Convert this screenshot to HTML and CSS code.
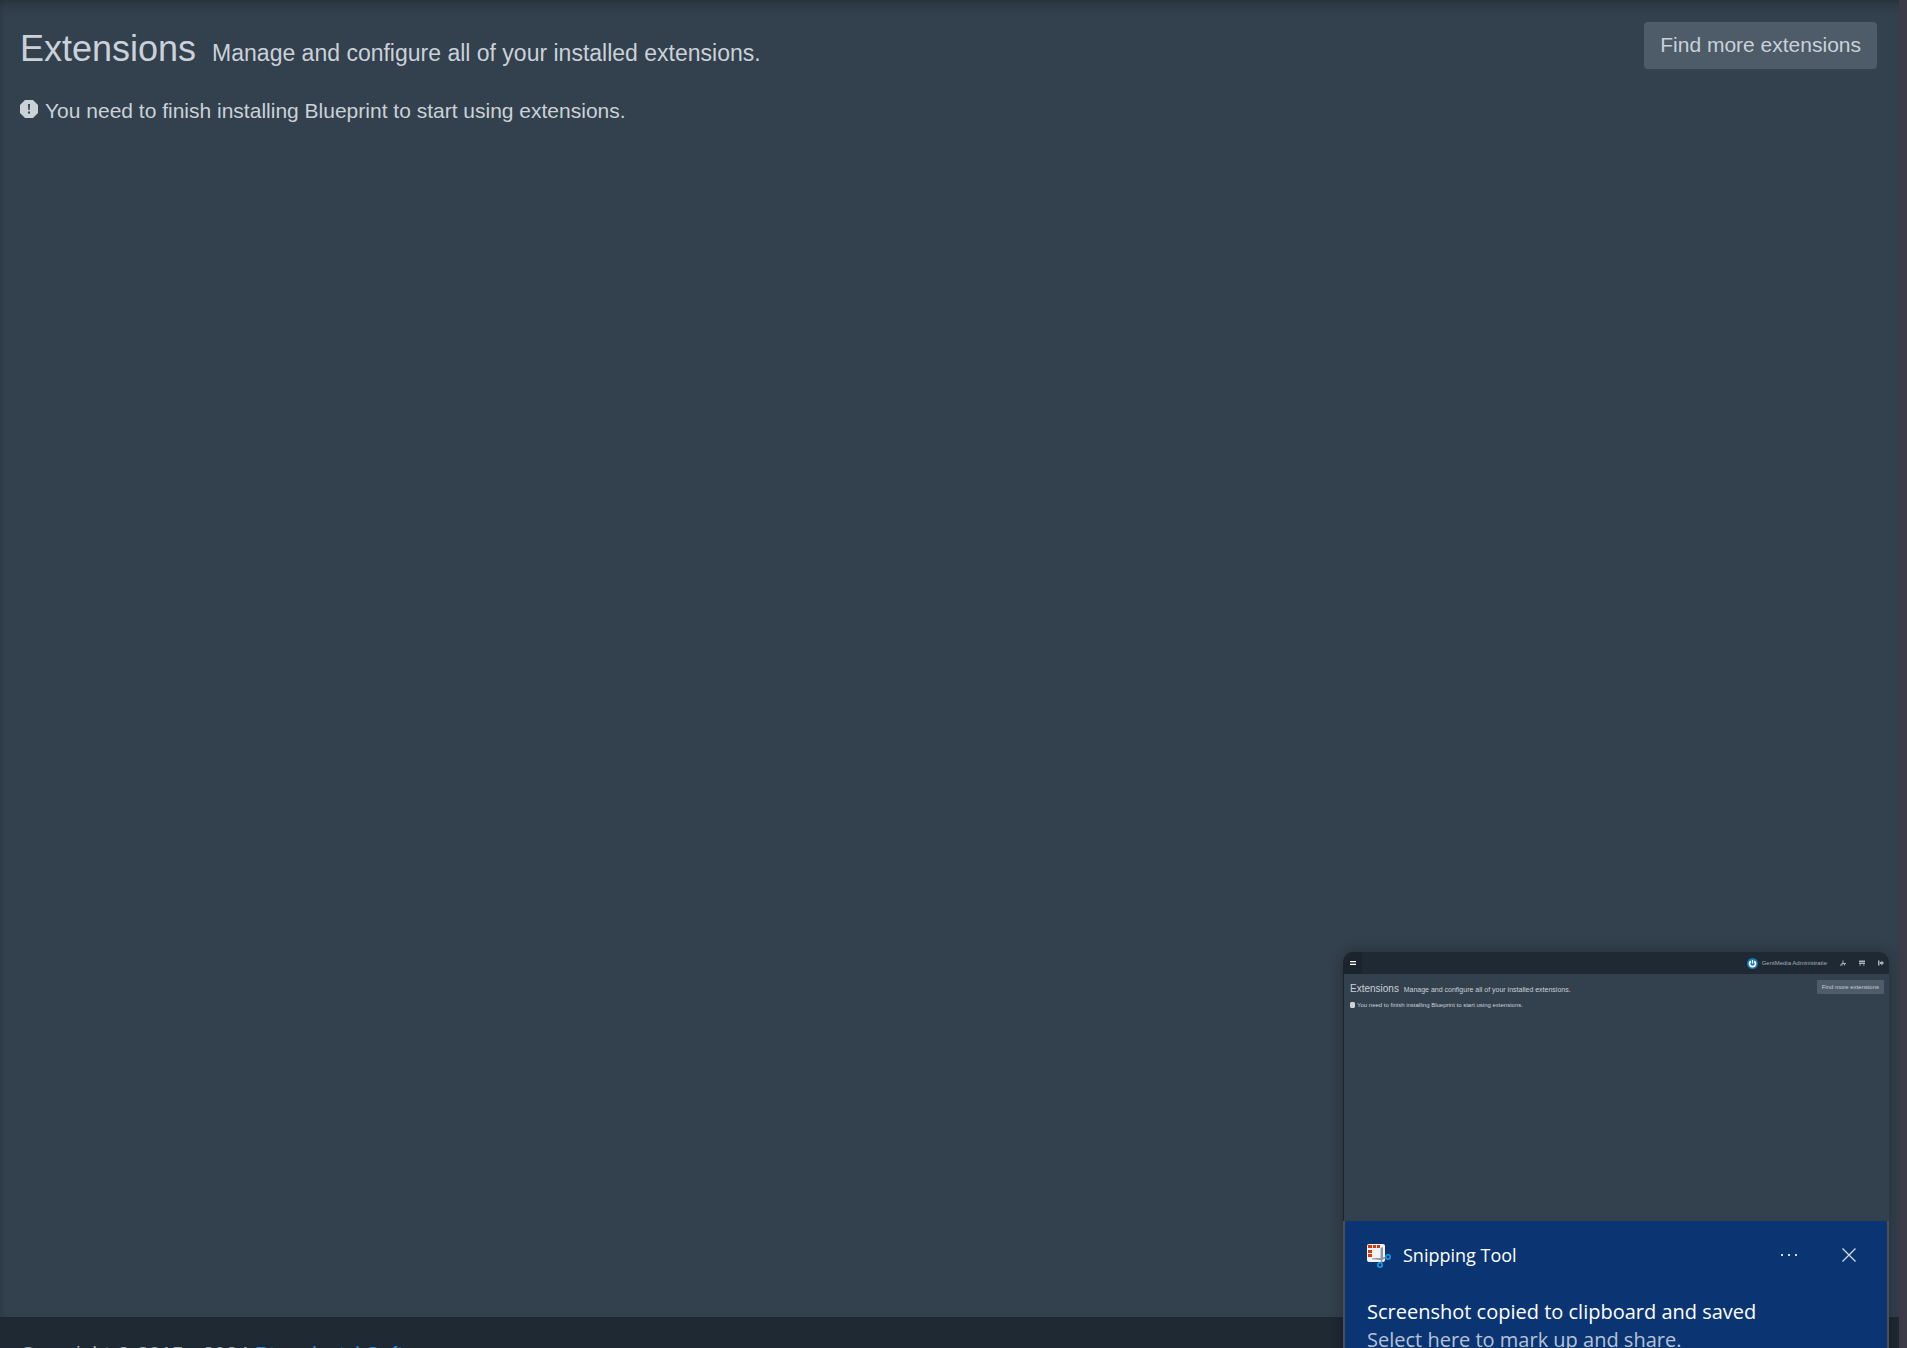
FILE: index.html
```
<!DOCTYPE html>
<html lang="en">
    <head>
        <meta charset="utf-8">
        <title>Extensions</title>
        <link rel="stylesheet" href="styles.css">
    </head>
    <body>
        <div class="wrapper">
            <main class="content">
                <div class="content-header">
                    <h1>Extensions <small>Manage and configure all of your installed extensions.</small></h1>
                    <button type="button" class="btn">Find more extensions</button>
                </div>
                <p class="notice">
                    <svg class="notice-icon" viewBox="0 0 18 18" aria-hidden="true">
                        <path fill="#cad1d8" d="M5 0h8l5 5v8l-5 5H5l-5-5V5z"/>
                        <path fill="#33404d" d="M8 4h2l-.3 6H8.300zM8 11.500h2v2H8z"/>
                    </svg>
                    You need to finish installing Blueprint to start using extensions.
                </p>
            </main>
            <footer class="footer">
                Copyright © 2015 - 2024 <a href="#">Pterodactyl Software</a>.
            </footer>
        </div>

        <!-- notification in the corner -->
        <aside class="toast">
            <div class="preview">
                <div class="preview-bar">
                    <div class="preview-menu">
                        <svg width="6" height="4" viewBox="0 0 6 4"><path fill="#fff" d="M0 0h6v1.300H0zM0 2.700h6V4H0z"/></svg>
                    </div>
                    <div class="preview-user">
                        <svg width="11" height="11" viewBox="0 0 22 22">
                            <circle cx="11" cy="11" r="11" fill="#1679b8"/>
                            <path d="M7.500 6.500a6 6 0 1 0 7 0" fill="none" stroke="#fff" stroke-width="3.500"/>
                            <path d="M11 4v7" stroke="#fff" stroke-width="2.500"/>
                        </svg>
                        <span>GentMedia Administratie</span>
                    </div>
                    <svg width="6" height="6" viewBox="0 0 12 12"><path d="M0 9h3V6h2V1h2v5h5v2h-2v3H8V8H5v3H0z" fill="#aab2ba"/></svg>
                    <svg width="6" height="6" viewBox="0 0 12 12"><path d="M0 1h12v3H0zM0 5h12v3H0zM1 9h3v2H1zM8 9h3v2H8z" fill="#aab2ba"/></svg>
                    <svg width="6" height="6" viewBox="0 0 12 12"><path d="M0 1h3v10H0zM4 4h3V1l5 5-5 5V8H4z" fill="#aab2ba"/></svg>
                </div>
                <div class="preview-body">
                    <div class="preview-header">
                        <div class="preview-title">Extensions <small>Manage and configure all of your installed extensions.</small></div>
                        <div class="preview-btn">Find more extensions</div>
                    </div>
                    <div class="preview-notice">
                        <svg width="5" height="6" viewBox="0 0 5 6"><path d="M1 0h3l1 1v4L4 6H1L0 5V1z" fill="#cad1d8"/></svg>
                        You need to finish installing Blueprint to start using extensions.
                    </div>
                </div>
            </div>
            <div class="toast-body">
                <div class="toast-header">
                    <svg class="toast-icon" width="24" height="24" viewBox="0 0 24 24" aria-hidden="true">
                        <rect width="18" height="18" rx="2" fill="#f3f3f5"/>
                        <path fill="#c4c7cb" d="M5 14h8V5l2-2v13H5z"/>
                        <path fill="#8f969d" d="M14 4l2-1v12l-2 1zM5 14h12v1l-4 1z"/>
                        <path fill="#d83b01" d="M1 1h4v3H1zM6 1h3v3H6zM10 1h3v3h-3zM1 6h4v3H1zM1 10h4v3H1z"/>
                        <path d="M14 19l1-4 4-2" fill="none" stroke="#8d949b" stroke-width="1.500"/>
                        <circle cx="21" cy="13" r="2.200" fill="none" stroke="#1c9be6" stroke-width="1.600"/>
                        <circle cx="13" cy="21" r="2.200" fill="none" stroke="#1c9be6" stroke-width="1.600"/>
                    </svg>
                    <span class="toast-app">Snipping Tool</span>
                    <button type="button" class="toast-btn" aria-label="More">
                        <svg width="16" height="2" viewBox="0 0 16 2"><path fill="#d3dbe6" d="M0 0h2v2H0zM7 0h2v2H7zM14 0h2v2h-2z"/></svg>
                    </button>
                    <button type="button" class="toast-btn" aria-label="Close">
                        <svg width="14" height="14" viewBox="0 0 14 14"><path d="M.5.5l13 13M13.500.5l-13 13" stroke="#d3dbe6" stroke-width="1.300"/></svg>
                    </button>
                </div>
                <div class="toast-title">Screenshot copied to clipboard and saved</div>
                <div class="toast-text">Select here to mark up and share.</div>
            </div>
        </aside>
    </body>
</html>
```
FILE: styles.css
```
* {
    box-sizing: border-box;
}
body {
    margin: 0;
    height: 100vh;
    overflow: hidden;
    background: #3c3b48;
    color: #cad1d8;
    font-family: "Liberation Sans", Arial, sans-serif;
    font-size: 21px;
    line-height: 28px;
}
.wrapper {
    display: flex;
    flex-direction: column;
    height: calc(100vh + 44px);
    margin-right: 8px;
}
.content {
    flex: 1;
    padding: 22px 22px 0 20px;
    background: #33404d;
    box-shadow: inset 0 12px 14px -10px rgba(0,0,0,0.3), inset 4px 0 6px -4px rgba(0,0,0,0.1);
}
.content-header {
    display: flex;
    justify-content: space-between;
    align-items: flex-start;
}
h1 {
    margin: 7px 0 0;
    font-size: 36px;
    font-weight: normal;
    line-height: 40px;
}
h1 small {
    margin-left: 6px;
    font-size: 23px;
}
.btn {
    height: 47px;
    padding: 0 16px 2px;
    border: 0;
    border-radius: 4px;
    background: #4e5b68;
    color: #cad1d8;
    font: inherit;
}
.notice {
    display: flex;
    align-items: center;
    gap: 7px;
    margin: 26px 0 0;
    line-height: 24px;
}
.notice-icon {
    width: 18px;
    height: 18px;
    margin-bottom: 4px;
}
.footer {
    height: 75px;
    padding: 23px 20px;
    background: #1f2933;
    color: #a3abb3;
}
.footer a {
    color: #288feb;
    text-decoration: none;
}

/* toast */
.toast {
    position: fixed;
    right: 18px;
    bottom: -48px;
    width: 546px;
    border-radius: 10px 10px 0 0;
    box-shadow: 0 0 14px rgba(0,0,0,0.3);
    font-family: "Open Sans", "Noto Sans", sans-serif;
}
.preview {
    height: 269px;
    overflow: hidden;
    border-left: 1px solid #1b222a;
    border-radius: 10px 10px 0 0;
    background: #33404d;
    font-family: "Liberation Sans", Arial, sans-serif;
    font-size: 6px;
    line-height: 8px;
}
.preview-bar {
    display: flex;
    align-items: center;
    gap: 13px;
    height: 22px;
    padding-right: 5px;
    background: #1f2933;
    color: #a3abb3;
}
.preview-menu {
    display: flex;
    align-items: center;
    width: 18px;
    height: 22px;
    padding-left: 6px;
    background: #1b242d;
}
.preview-user {
    display: flex;
    align-items: center;
    gap: 4px;
    margin-left: auto;
}
.preview-body {
    padding: 6px 5px 0 6px;
}
.preview-header {
    display: flex;
    justify-content: space-between;
}
.preview-title {
    font-size: 10px;
    line-height: 17px;
}
.preview-title small {
    margin-left: 2px;
    font-size: 7px;
}
.preview-btn {
    height: 14px;
    padding: 0 5px;
    border-radius: 1px;
    background: #4e5b68;
    line-height: 14px;
}
.preview-notice {
    display: flex;
    align-items: center;
    gap: 2px;
    margin-top: 3px;
}
.toast-body {
    height: 175px;
    padding: 18px 21px 0 22px;
    border: solid #4b4f57;
    border-width: 0 2px;
    background: #0b3572;
    color: #fff;
}
.toast-header {
    display: flex;
    align-items: center;
    height: 32px;
}
.toast-icon {
    margin: 2px 12px 0 0;
}
.toast-app {
    margin-right: auto;
    font-size: 18px;
}
.toast-btn {
    display: flex;
    align-items: center;
    justify-content: center;
    width: 30px;
    height: 32px;
    margin-left: 30px;
    padding: 0;
    border: 0;
    background: none;
}
.toast-btn:last-child {
    margin-right: 2px;
}
.toast-title,
.toast-text {
    font-size: 20px;
    line-height: 28px;
}
.toast-title {
    margin-top: 27px;
}
.toast-text {
    color: #b6c3d6;
}
```
